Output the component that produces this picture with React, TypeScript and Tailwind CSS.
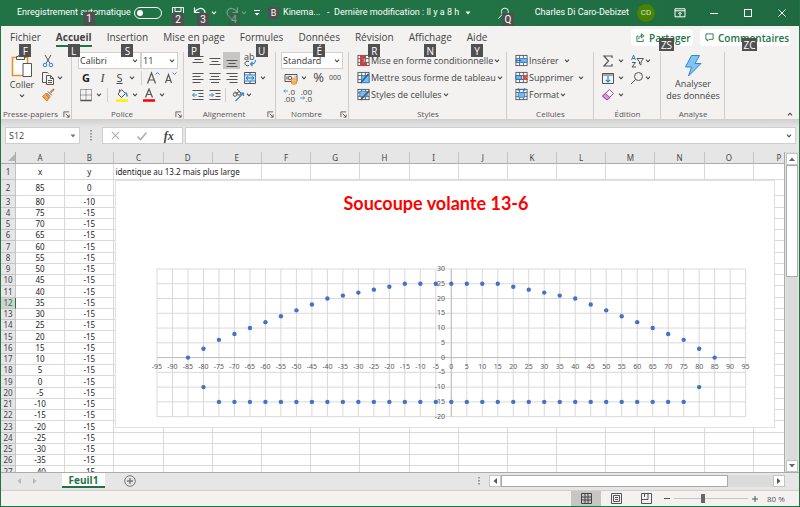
import { useState } from "react";
import type { ReactNode } from "react";

const columns = ["A", "B", "C", "D", "E", "F", "G", "H", "I", "J", "K", "L", "M", "N", "O"];

const tabs = [
  { name: "Fichier", hint: "F" },
  { name: "Accueil", hint: "L" },
  { name: "Insertion", hint: "S" },
  { name: "Mise en page", hint: "P" },
  { name: "Formules", hint: "U" },
  { name: "Données", hint: "É" },
  { name: "Révision", hint: "R" },
  { name: "Affichage", hint: "N" },
  { name: "Aide", hint: "Y" },
];

// rows 2 to 27 of the sheet
const data = Array.from({ length: 26 }, (_, i) => ({
  row: i + 2,
  x: 85 - i * 5,
  y: i === 0 ? 0 : i === 1 ? -10 : -15,
}));

// height of the dome for |x| = 0, 5, 10 ... 85
const dome = [25, 25, 25, 25, 24, 23, 22, 21, 20, 18, 16, 14, 12, 10, 8, 6, 3, 0];

const steps = Array.from({ length: 39 }, (_, i) => i * 5 - 95);
const levels = [30, 25, 20, 15, 10, 5, 0, -5, -10, -15, -20];

const points: number[][] = [];
for (const x of steps) {
  const a = Math.abs(x);
  if (a <= 85) points.push([x, dome[a / 5]]);
  if (a <= 75) points.push([x, -15]);
  if (a === 80) points.push([x, -10]);
}

const px = (x: number) => 42 + (x + 95) * 3.098;
const py = (y: number) => 89 + (30 - y) * 2.953;

function Hint({ children, className = "" }: { children: ReactNode; className?: string }) {
  return (
    <span
      className={`absolute z-10 flex h-[13px] min-w-[12px] items-center justify-center bg-[#505050] px-px text-[10px] leading-none text-white ${className}`}
    >
      {children}
    </span>
  );
}

function Caret({ className = "" }: { className?: string }) {
  return (
    <svg viewBox="0 0 6 4" className={`h-1 w-1.5 shrink-0 ${className}`} fill="none" stroke="currentColor" strokeWidth="1.1">
      <path d="M1 .7 3 2.8 5 .7" />
    </svg>
  );
}

function Icon({ children, label, className = "" }: { children: ReactNode; label: string; className?: string }) {
  return (
    <button type="button" aria-label={label} className={`flex h-[17px] w-[17px] shrink-0 items-center justify-center ${className}`}>
      <svg viewBox="0 0 14 14" className="h-[14px] w-[14px]" fill="none" stroke="#555" strokeWidth="1">
        {children}
      </svg>
    </button>
  );
}

function Launcher() {
  return (
    <svg viewBox="0 0 8 8" className="absolute right-[2px] bottom-px h-[7px] w-[7px]" fill="none" stroke="#555" strokeWidth="1">
      <path d="M1 7V1h6M3 3l4 4M7 4v3H4" />
    </svg>
  );
}

function Group({ title, className, launcher, children }: { title: string; className: string; launcher?: boolean; children: ReactNode }) {
  return (
    <section className={`relative flex shrink-0 flex-col ${className}`}>
      <div className="h-[51px]">{children}</div>
      <h2 className={`mt-auto text-center text-[8px] leading-[10px] whitespace-nowrap text-[#555] ${launcher ? "pr-[12px]" : ""}`}>{title}</h2>
      {launcher && <Launcher />}
      <span className="absolute top-0 right-0 h-full w-px bg-[#cfcdcb]" />
    </section>
  );
}

function Picker({ label, value, className }: { label: string; value: string; className: string }) {
  return (
    <div className={`relative h-[17px] ${className}`}>
      <select aria-label={label} className="block h-full w-full appearance-none border border-[#d2d0ce] bg-white px-px text-[9px] leading-none text-[#333]">
        <option>{value}</option>
      </select>
      <Caret className="pointer-events-none absolute top-[7px] right-[3px]" />
    </div>
  );
}

const Divider = () => <span className="block h-[14px] w-px shrink-0 bg-[#d2d0ce]" />;

function TableGlyph() {
  return (
    <>
      <rect x="1" y="1.5" width="12" height="11" fill="#fff" />
      <path d="M1 5h12M1 9h12M5 1.5v11M9 1.5v11" />
    </>
  );
}

function TitleBar() {
  return (
    <header className="flex h-[26px] shrink-0 items-center bg-linear-to-r from-[#217346] from-55% to-[#206a41] font-['Roboto',sans-serif] text-[9px] text-white">
      <label htmlFor="autosave" className="relative w-[117px] pl-4 whitespace-nowrap">
        Enregistrement automatique
        <Hint className="top-[6px] left-[82px]">1</Hint>
      </label>
      <span className="relative ml-4 flex h-3 w-7 items-center rounded-full border border-white">
        <input id="autosave" type="checkbox" role="switch" className="ml-0.5 h-1.5 w-1.5 appearance-none rounded-full bg-white" />
      </span>
      <button type="button" aria-label="Enregistrer" className="relative ml-[9px] h-full w-[14px]">
        <svg viewBox="0 0 14 14" className="h-[14px] w-[14px]" fill="none" stroke="#fff">
          <path d="M1.5 1.5h11v11h-9l-2-2zM4 1.5v4h6v-4M4 12.5v-4h6v4" />
        </svg>
        <Hint className="top-[13px] left-px">2</Hint>
      </button>
      <button type="button" aria-label="Annuler" className="relative ml-[8px] h-full w-[14px]">
        <svg viewBox="0 0 14 14" className="h-[14px] w-[14px]" fill="none" stroke="#fff" strokeWidth="1.2">
          <path d="M1.5 1.5v5h5M1.8 6.2C4 2.5 8 1.5 10.500 3.500 13 5.500 12 8.500 10 10.500L7 13.500" />
        </svg>
        <Hint className="top-[13px] left-[4px]">3</Hint>
      </button>
      <Caret className="ml-1" />
      <button type="button" aria-label="Rétablir" disabled className="relative ml-[8px] h-full w-[14px]">
        <svg viewBox="0 0 14 14" className="h-[14px] w-[14px] opacity-35" fill="none" stroke="#fff" strokeWidth="1.2">
          <path d="M12.500 1.500v5h-5M12.200 6.200C10 2.500 6 1.500 3.500 3.500 1 5.500 2 8.500 4 10.500L7 13.500" />
        </svg>
        <Hint className="top-[13px] left-[3px] opacity-40">4</Hint>
      </button>
      <Caret className="ml-0.5 opacity-35" />
      <svg viewBox="0 0 8 8" className="ml-[6px] h-2 w-2" fill="#fff">
        <path d="M1 1h6v1H1zM1.500 4h5L4 6.500z" />
      </svg>
      <span className="ml-[7px] flex h-[12px] w-[11px] items-center justify-center bg-[#505050] text-[9px] leading-none">B</span>
      <span className="ml-1 w-[44px]">Kinema...</span>
      <span className="w-[7px]">-</span>
      <button type="button" className="flex w-[150px] items-center gap-1.5 whitespace-nowrap">
        Dernière modification : Il y a 8 h
        <svg viewBox="0 0 6 4" className="h-1 w-1.5" fill="#fff">
          <path d="M.5.5h5L3 3.500z" />
        </svg>
      </button>
      <button type="button" aria-label="Rechercher" className="relative ml-[13px] h-full w-[16px]">
        <svg viewBox="0 0 14 14" className="h-[13px] w-[13px]" fill="none" stroke="#fff">
          <circle cx="8.500" cy="5" r="3.800" />
          <path d="M5.800 7.800 1.500 12.500" />
        </svg>
        <Hint className="top-[13px] left-[5px]">Q</Hint>
      </button>
      <span className="ml-auto whitespace-nowrap">Charles Di Caro-Debizet</span>
      <span className="ml-2 flex h-[18px] w-[18px] items-center justify-center rounded-full bg-[#498205] text-[8px] text-[#d5e8bd]">CD</span>
      <div className="flex items-center">
        <button type="button" aria-label="Options du ruban" className="flex w-[34px] justify-center pl-[16px]">
          <svg viewBox="0 0 12 10" className="h-[10px] w-3 shrink-0" fill="none" stroke="#fff">
            <path d="M1 .8h10v8H1zM1 2.800h10M6 8V4.500M4.300 6 6 4.300 7.700 6" />
          </svg>
        </button>
        <button type="button" aria-label="Réduire" className="flex w-[34px] justify-center pl-[16px]">
          <span className="h-px w-2 bg-white" />
        </button>
        <button type="button" aria-label="Agrandir" className="flex w-[34px] justify-center pl-[16px]">
          <span className="h-2 w-2 shrink-0 border border-white" />
        </button>
        <button type="button" aria-label="Fermer" className="flex w-[42px] justify-center pl-[8px]">
          <svg viewBox="0 0 8 8" className="h-2 w-2" stroke="#fff">
            <path d="m.5.5 7 7m0-7-7 7" />
          </svg>
        </button>
      </div>
    </header>
  );
}

function TabBar({ active, onSelect }: { active: string; onSelect: (name: string) => void }) {
  return (
    <nav className="flex h-[25px] shrink-0 gap-[15px] pl-[9px] text-[10px] text-[#444]">
      {tabs.map((tab) => (
        <button
          key={tab.name}
          type="button"
          onClick={() => onSelect(tab.name)}
          className={`relative h-[21px] whitespace-nowrap border-b-2 pt-[3px] leading-none ${
            active === tab.name ? "border-[#217346] font-bold" : "border-transparent"
          }`}
        >
          {tab.name}
          <Hint className="top-[18px] left-1/2 -translate-x-1/2 font-normal">{tab.hint}</Hint>
        </button>
      ))}
      <div className="ml-auto flex gap-[7px] pt-[3px] pr-[9px] font-semibold text-[#217346]">
        <button type="button" className="relative flex h-[17px] w-[62px] items-center gap-1 rounded-sm bg-white pl-[5px] leading-none">
          <svg viewBox="0 0 10 10" className="h-[9px] w-[9px] shrink-0" fill="none" stroke="#217346">
            <path d="M3 3.500H1v6h7V7M3 7c0-3 2-4 4-4M6 .8 9 3.200 6 5.500z" />
          </svg>
          Partager
          <Hint className="top-[9px] left-[28px] w-[15px] font-normal">ZS</Hint>
        </button>
        <button type="button" className="relative flex h-[17px] w-[90px] items-center gap-1 rounded-sm bg-white pl-[5px] leading-none">
          <svg viewBox="0 0 10 10" className="h-[9px] w-[9px] shrink-0" fill="none" stroke="#217346">
            <path d="M1 1h8v6H4.500L2.500 9V7H1z" />
          </svg>
          Commentaires
          <Hint className="top-[9px] left-[42px] w-[15px] font-normal">ZC</Hint>
        </button>
      </div>
    </nav>
  );
}

function Ribbon() {
  return (
    <div className="flex h-[68px] shrink-0 pt-px text-[9px] leading-none text-[#444]">
      <Group title="Presse-papiers" className="w-[71px]" launcher>
        <div className="flex">
          <button type="button" className="flex w-[38px] flex-col items-center pt-0.5 pl-1">
            <svg viewBox="0 0 22 24" className="h-[24px] w-[22px] shrink-0" fill="none">
              <path d="M1.500 3.500h15v18h-15z" fill="#fff" stroke="#e8912d" strokeWidth="1.600" />
              <path d="M5.500 5.500v-3h2a2 2 0 0 1 4 0h2v3z" fill="#f3f2f1" stroke="#555" />
              <path d="M12 9.500h8.500v13H12z" fill="#fff" stroke="#555" />
            </svg>
            <span className="mt-[2px]">Coller</span>
            <Caret className="mt-[5px]" />
          </button>
          <div className="flex flex-col">
            <Icon label="Couper">
              <path d="m4 1 5 8.500M10 1 5 9.500" />
              <circle cx="4" cy="11" r="1.800" stroke="#2b88d8" />
              <circle cx="10" cy="11" r="1.800" stroke="#2b88d8" />
            </Icon>
            <div className="flex items-center">
              <Icon label="Copier">
                <path d="M5 11.500H1.500v-10h5l1 1M5.500 4.500h4l3 3v6h-7zM9.500 4.500v3h3M7 9.500h4M7 11.500h4" />
              </Icon>
              <Caret className="ml-px" />
            </div>
            <Icon label="Reproduire la mise en forme">
              <path d="M13 1 9.500 4.500" stroke="#dd7a1f" strokeWidth="1.800" />
              <path d="m7 3.500 3.800 3.800M5.500 5 9 8.500" />
              <path d="m5 5.500 3.800 3.800-3 3.700L1.500 8.500z" fill="#f7b26b" stroke="#dd7a1f" />
              <path d="m3 8.500 3 3M5 7l3 3" stroke="#dd7a1f" />
            </Icon>
          </div>
        </div>
      </Group>

      <Group title="Police" className="w-[112px]" launcher>
        <div className="flex pl-[6px]">
          <Picker label="Police" value="Calibri" className="w-[63px]" />
          <Picker label="Taille" value="11" className="w-[37px]" />
        </div>
        <div className="flex h-[17px] items-center pl-[6px]">
          <button type="button" className="w-[16px] text-[11px] font-bold text-[#222]">G</button>
          <button type="button" className="w-[17px] font-['Liberation_Serif',serif] text-[12px] italic">I</button>
          <button type="button" className="w-[17px] text-[11px] underline">S</button>
          <Caret className="ml-px" />
          <span className="ml-[6px]"><Divider /></span>
          <Icon label="Augmenter la taille" className="ml-0.5">
            <path d="m1.500 12.500 4-10.500 4 10.500M3 9h5" strokeWidth="1.200" />
            <path d="m9.500 3.500 2-2 2 2" stroke="#2b88d8" />
          </Icon>
          <Icon label="Diminuer la taille">
            <path d="m2.500 12 3-8.500 3 8.500M3.500 9.500h4" strokeWidth="1.200" />
            <path d="m9.500 1.500 2 2 2-2" stroke="#2b88d8" />
          </Icon>
        </div>
        <div className="flex h-[17px] items-center pl-[5px]">
          <Icon label="Bordures">
            <path d="M1.500 1.500h11v11h-11zM7 1.500v11M1.500 7h11" strokeDasharray="1 1" />
            <path d="M1.500 12.500h11" strokeWidth="1.500" />
          </Icon>
          <Caret className="ml-0.5" />
          <span className="mx-[5px]"><Divider /></span>
          <Icon label="Remplissage">
            <path d="m6.500 1.500 4 4-4 4-3.500-3.500zM4.500 4V1.500" />
            <path d="M10.500 4.500c2 1.500 1.500 3 1.500 4" stroke="#2b88d8" strokeWidth="1.500" />
            <path d="M1 12.500h12" stroke="#ffef00" strokeWidth="2.500" />
          </Icon>
          <Caret className="ml-0.5" />
          <Icon label="Couleur de police" className="ml-[2px]">
            <path d="M3.500 9.500 7 1l3.500 8.500M4.800 6.500h4.400" strokeWidth="1.200" />
            <path d="M1 12.500h12" stroke="#f00" strokeWidth="2.500" />
          </Icon>
          <Caret className="ml-0.5" />
        </div>
      </Group>

      <Group title="Alignement" className="w-[92px]" launcher>
        <div className="flex h-[17px] items-center pl-[5px]">
          <Icon label="Aligner en haut"><path d="M1.500 2.500h11M3.500 5.500h7M1.500 8.500h11" /></Icon>
          <Icon label="Aligner au centre"><path d="M1.500 4.500h11M3.500 7.500h7M1.500 10.500h11" /></Icon>
          <Icon label="Aligner en bas" className="bg-[#c8c6c4]"><path d="M1.500 6.500h11M3.500 9.500h7M1.500 12.500h11" /></Icon>
          <span className="ml-[4px] h-[15px] w-[14px] leading-[7px]">
            ab
            <svg viewBox="0 0 14 8" className="h-2 w-[14px]" fill="none" stroke="#444">
              <path d="M5 1.500C2 .5 1 2 1 3.500S2.500 6.500 5 5.500" />
              <path d="M11.500 0c0 3-1 4-5 4M8.500 2l-2 2 2 2" stroke="#2b88d8" strokeWidth="1.200" />
            </svg>
          </span>
        </div>
        <div className="flex h-[17px] items-center pl-[5px]">
          <Icon label="Aligner à gauche"><path d="M1.500 2.500h11M1.500 5.500h8M1.500 8.500h11M1.500 11.500h8" /></Icon>
          <Icon label="Centrer"><path d="M1.500 2.500h11M3 5.500h8M1.500 8.500h11M3 11.500h8" /></Icon>
          <Icon label="Aligner à droite"><path d="M1.500 2.500h11M4.500 5.500h8M1.500 8.500h11M4.500 11.500h8" /></Icon>
          <Icon label="Fusionner et centrer" className="ml-px">
            <path d="M1.500 1.500h11v11h-11zM7 1.500v2.500M7 10v2.500" />
            <path d="M1.500 4h11v6h-11z" fill="#cfe6fa" stroke="#2b88d8" />
            <path d="M3 7h8M5 5.200 3.200 7 5 8.800M9 5.200 10.800 7 9 8.800" stroke="#1b6fbf" />
          </Icon>
          <Caret className="ml-[2px]" />
        </div>
        <div className="flex h-[17px] items-center pl-[5px]">
          <Icon label="Diminuer le retrait">
            <path d="M1.500 2.500h11M7.500 5.500h5M7.500 8.500h5M1.500 11.500h11" />
            <path d="M6 7H1.500M3.500 5l-2 2 2 2" stroke="#2b88d8" />
          </Icon>
          <Icon label="Augmenter le retrait">
            <path d="M1.500 2.500h11M7.500 5.500h5M7.500 8.500h5M1.500 11.500h11" />
            <path d="M1 7h4.500M3.500 5l2 2-2 2" stroke="#2b88d8" />
          </Icon>
          <span className="ml-[2px]"><Divider /></span>
          <Icon label="Orientation" className="ml-[3px]">
            <circle cx="4" cy="6.500" r="1.800" />
            <path d="m4 3.500 3 3M6 1l4.500 4.500" />
            <circle cx="8" cy="5.500" r="1.700" />
            <path d="m4.500 13 8-8M9.500 5h3v3" stroke="#2b88d8" strokeWidth="1.200" />
          </Icon>
          <Caret />
        </div>
      </Group>

      <Group title="Nombre" className="w-[73px]" launcher>
        <Picker label="Format de nombre" value="Standard" className="ml-[5px] w-[62px]" />
        <div className="flex h-[17px] items-center pl-[6px]">
          <Icon label="Format comptable">
            <path d="M1 3.500h12v7H1zM3 5.500v3M11 5.500v1" />
            <circle cx="6" cy="7" r="1.800" />
            <path d="M7.500 8.500v4c1 1 4 1 5 0v-4c-1-1-4-1-5 0M7.500 10.500c1 1 4 1 5 0" fill="#f9c37c" stroke="#e8912d" />
          </Icon>
          <Caret className="ml-0.5" />
          <button type="button" className="ml-[4px] w-[15px] text-[13px]">%</button>
          <button type="button" className="ml-[3px] text-[7px]">000</button>
        </div>
        <div className="flex h-[17px] items-center pl-[6px]">
          {["Ajouter une décimale", "Réduire les décimales"].map((label, i) => (
            <button key={label} type="button" aria-label={label} className="flex h-[17px] w-[17px] flex-col justify-center text-[8px] leading-[7px]">
              <span className="flex w-full items-center justify-between pl-px">
                {i === 0 ? <svg viewBox="0 0 7 6" className="h-1.5 w-[7px]" fill="none" stroke="#2b88d8"><path d="M7 3H1M3 1 1 3l2 2" /></svg> : <span />}
                <span className="pr-1">{i === 0 ? ".0" : ".00"}</span>
              </span>
              <span className="flex w-full items-center justify-between pl-px">
                {i === 1 ? <svg viewBox="0 0 7 6" className="h-1.5 w-[7px]" fill="none" stroke="#2b88d8"><path d="M0 3h6M4 1l2 2-2 2" /></svg> : <span />}
                <span className="pr-1">{i === 0 ? ".00" : ".0"}</span>
              </span>
            </button>
          ))}
        </div>
      </Group>

      <Group title="Styles" className="w-[158px]">
        <button type="button" className="flex h-[17px] items-center gap-px pl-[8px] whitespace-nowrap">
          <svg viewBox="0 0 14 14" className="h-[13px] w-[13px] shrink-0" fill="none" stroke="#555">
            <TableGlyph />
            <path d="M4.500 1v12M5 3h4M5 7h3M5 11h6" stroke="#d83b3b" strokeWidth="2.500" />
          </svg>
          Mise en forme conditionnelle <Caret />
        </button>
        <button type="button" className="flex h-[17px] items-center gap-px pl-[8px] whitespace-nowrap">
          <svg viewBox="0 0 14 14" className="h-[13px] w-[13px] shrink-0" fill="none" stroke="#555">
            <TableGlyph />
            <path d="M5 5h8v7.500H5z" fill="#7db9ea" stroke="#2b88d8" />
            <path d="m12.500 3-7 8-1.500 2" stroke="#1b5fa0" strokeWidth="1.600" />
          </svg>
          Mettre sous forme de tableau <Caret />
        </button>
        <button type="button" className="flex h-[17px] items-center gap-px pl-[8px] whitespace-nowrap">
          <svg viewBox="0 0 14 14" className="h-[13px] w-[13px] shrink-0" fill="none" stroke="#555">
            <TableGlyph />
            <path d="M3 3.500h8v6H3z" fill="#7db9ea" stroke="#2b88d8" />
            <path d="m13 3-7.500 8-1.500 2" stroke="#555" strokeWidth="1.600" />
          </svg>
          Styles de cellules <Caret />
        </button>
      </Group>

      <Group title="Cellules" className="w-[87px]">
        <button type="button" className="flex h-[17px] items-center gap-px pl-[8px]">
          <svg viewBox="0 0 14 14" className="h-[13px] w-[13px] shrink-0" fill="none" stroke="#555">
            <TableGlyph />
            <path d="M5 5h8v4H5z" fill="#7db9ea" stroke="#2b88d8" />
            <path d="M7 7H1M3.500 4.500 1 7l2.500 2.500" stroke="#1b6fbf" />
          </svg>
          Insérer <Caret className="ml-1" />
        </button>
        <button type="button" className="flex h-[17px] items-center gap-px pl-[8px]">
          <svg viewBox="0 0 14 14" className="h-[13px] w-[13px] shrink-0" fill="none" stroke="#555">
            <TableGlyph />
            <path d="M1 5h6v4H1z" fill="#7db9ea" stroke="#1b6fbf" />
            <path d="m8.500 4.500 5 5m0-5-5 5" stroke="#e03c31" strokeWidth="1.400" />
          </svg>
          Supprimer <Caret className="ml-1" />
        </button>
        <button type="button" className="flex h-[17px] items-center gap-px pl-[8px]">
          <svg viewBox="0 0 14 14" className="h-[13px] w-[13px] shrink-0" fill="none" stroke="#555">
            <TableGlyph />
            <path d="M3.500 5h7v5h-7z" fill="#7db9ea" stroke="#2b88d8" />
            <path d="M3.500 0v3M10.500 0v3M3.500 1.500h7" stroke="#1b6fbf" />
          </svg>
          Format <Caret />
        </button>
      </Group>

      <Group title="Édition" className="w-[67px]">
        <div className="flex h-[17px] items-center pl-[5px]">
          <Icon label="Somme automatique"><path d="M11 4V2H3l4.500 5L3 12h8v-2" strokeWidth="1.200" /></Icon>
          <Caret className="ml-[2px]" />
          <Icon label="Trier et filtrer" className="ml-[4px]">
            <path d="m1.500 6 2-5 2 5M2.200 4.500h2.600" stroke="#2b88d8" />
            <path d="M2 8.500h3.500l-3.500 4.500H6M7 4.500h6.500l-2.500 3.500v3L9.500 10V8z" />
          </Icon>
          <Caret />
        </div>
        <div className="flex h-[17px] items-center pl-[5px]">
          <Icon label="Remplir">
            <path d="M1.500 2.500h11v10h-11zM1.500 4h11" />
            <path d="M7 5v6M4.800 8.800 7 11l2.200-2.200" stroke="#2b88d8" strokeWidth="1.200" />
          </Icon>
          <Caret className="ml-[2px]" />
          <Icon label="Rechercher et sélectionner" className="ml-[4px]">
            <circle cx="8.500" cy="5.500" r="4" />
            <path d="m5.500 8.500-4.500 4.500" />
          </Icon>
          <Caret />
        </div>
        <div className="flex h-[17px] items-center pl-[5px]">
          <Icon label="Effacer">
            <path d="m8.500 1.500 4 4L6 12 1.500 8z" fill="#fff" stroke="#a349a4" />
            <path d="M4.500 5.500 9 9.500 6 12 1.500 8z" fill="#d39ad6" stroke="#a349a4" />
          </Icon>
          <Caret className="ml-[2px]" />
        </div>
      </Group>

      <Group title="Analyse" className="w-[64px]">
        <button type="button" className="flex w-full flex-col items-center pt-0.5 leading-[12px] whitespace-nowrap">
          <svg viewBox="0 0 18 24" className="h-[24px] w-[18px]" fill="#83c3f1" stroke="#2b88d8">
            <path d="M7.500 1.500h8L11 9.500h6L4.500 22l3-9H1.500z" />
          </svg>
          <span>Analyser</span>
          <span>des données</span>
        </button>
      </Group>
      <button type="button" aria-label="Réduire le ruban" className="mt-auto mr-[6px] mb-[3px] ml-auto">
        <Caret className="rotate-180" />
      </button>
    </div>
  );
}

function FormulaBar() {
  return (
    <div className="flex h-[33px] shrink-0 items-start bg-linear-to-b from-[#cfcfcf] to-[#e6e6e6] to-25% pt-[8px] pr-[3px] pl-1 text-[#444]">
      <div className="relative h-[17px] w-[75px]">
        <input aria-label="Zone Nom" defaultValue="S12" className="block h-full w-full border border-[#cfcfcf] bg-white pl-[3px] text-[9px]" />
        <svg viewBox="0 0 6 4" className="absolute top-[7px] right-[4px] h-1 w-1.5" fill="#777">
          <path d="M.5.500h5L3 3.500z" />
        </svg>
      </div>
      <svg viewBox="0 0 2 11" className="mt-[3px] ml-[10px] h-[11px] w-0.5" fill="#999">
        <path d="M0 0h2v1.500H0zM0 3h2v1.500H0zM0 6h2v1.500H0zM0 9h2v1.500H0z" />
      </svg>
      <div className="ml-[10px] flex h-[17px] w-[81px] items-center justify-around border border-[#cfcfcf] bg-white">
        <svg viewBox="0 0 10 10" className="h-[9px] w-[9px]" fill="none" stroke="#b0b0b0" strokeWidth="1.300">
          <path d="m1 1 8 8m0-8L1 9" />
        </svg>
        <svg viewBox="0 0 10 10" className="h-[10px] w-[10px]" fill="none" stroke="#b0b0b0" strokeWidth="1.600">
          <path d="M.5 5.500 3.500 8.500 9.500 1.500" />
        </svg>
        <button type="button" aria-label="Insérer une fonction" className="font-['Liberation_Serif',serif] text-[12px] leading-none font-bold italic">fx</button>
      </div>
      <div className="relative ml-0.5 h-[17px] flex-1">
        <input aria-label="Barre de formule" className="block h-full w-full border border-[#cfcfcf] bg-white px-1 text-[9px]" />
        <Caret className="absolute top-[7px] right-[4px]" />
      </div>
    </div>
  );
}

function Chart() {
  return (
    <figure className="absolute top-[28px] left-[114px] h-[248px] w-[660px] border border-[#e1e1e1] bg-white">
      <figcaption className="absolute top-[10px] left-0 w-[640px] text-center font-['Lato',sans-serif] text-[18px] leading-[24px] font-bold text-[#f00]">
        Soucoupe volante 13-6
      </figcaption>
      <svg viewBox="1 1 658 246" className="h-full w-full" fontSize="7" fill="#595959">
        <g stroke="#d9d9d9">
          {steps.map((x) => (
            <path key={x} d={`M${px(x)} ${py(30)}V${py(-20)}`} />
          ))}
          {levels.map((y) => (
            <path key={y} d={`M${px(-95)} ${py(y)}H${px(95)}`} />
          ))}
          <path d={`M${px(0)} ${py(30)}V${py(-20)}M${px(-95)} ${py(0)}H${px(95)}`} stroke="#bfbfbf" />
        </g>
        <g textAnchor="middle">
          {steps.map((x) => (
            <text key={x} x={px(x)} y="189">{x}</text>
          ))}
        </g>
        <g textAnchor="end">
          {levels.map((y) => (
            <text key={y} x="330" y={py(y) + 2}>{y}</text>
          ))}
        </g>
        <g fill="#4472c4">
          {points.map(([x, y]) => (
            <circle key={`${x},${y}`} cx={px(x)} cy={py(y)} r="2.200" />
          ))}
        </g>
      </svg>
    </figure>
  );
}

const line = "border-r border-b border-[#d9d9d9] p-0";
const side = "border-r border-b border-[#c4c4c4] p-0 text-[8px] font-normal";

function Sheet() {
  return (
    <div className="flex min-h-0 flex-1 bg-[#e6e6e6] font-['Noto_Sans',sans-serif]">
      <div className="relative flex-1 overflow-hidden border-r border-[#ababab]">
        <table className="w-full table-fixed border-separate border-spacing-0 bg-white text-center text-[8px] leading-[10px] text-[#222]">
          <colgroup>
            <col className="w-[15px]" />
            {columns.map((c) => (
              <col key={c} />
            ))}
            <col className="w-[30px]" />
          </colgroup>
          <thead>
            <tr className="h-[12px] bg-[#e6e6e6] text-[#444]">
              <th className="border-r border-b border-[#ababab] p-0">
                <svg viewBox="0 0 8 8" className="ml-auto h-[7px] w-[7px]" fill="#b4b4b4">
                  <path d="M8 0v8H0z" />
                </svg>
              </th>
              {columns.map((c) => (
                <th key={c} scope="col" className="border-r border-b border-r-[#c4c4c4] border-b-[#ababab] p-0 font-normal">{c}</th>
              ))}
              <th scope="col" className="border-b border-[#ababab] p-0 pl-[20px] font-normal">P</th>
            </tr>
          </thead>
          <tbody>
            <tr className="h-[16px]">
              <th scope="row" className={`${side} bg-[#e6e6e6] text-[#444]`}>1</th>
              <td className={line}>x</td>
              <td className={line}>y</td>
              <td colSpan={3} className="border-r border-b border-[#d9d9d9] p-0 pl-px text-left whitespace-nowrap">identique au 13.2 mais plus large</td>
              {columns.slice(5).map((c) => (
                <td key={c} className={line} />
              ))}
              <td className="border-b border-[#d9d9d9]" />
            </tr>
            {data.map(({ row, x, y }) => (
              <tr key={row} className={row === 2 ? "h-[16px]" : row % 4 === 3 ? "h-[12px]" : "h-[11px]"}>
                <th
                  scope="row"
                  className={`${side} ${row === 12 ? "border-r-[#217346] bg-[#d2d2d2] text-[#217346]" : "bg-[#e6e6e6] text-[#444]"}`}
                >
                  {row}
                </th>
                <td className={line}>{x}</td>
                <td className={line}>{y}</td>
                {columns.slice(2).map((c) => (
                  <td key={c} className={line} />
                ))}
                <td className="border-b border-[#d9d9d9]" />
              </tr>
            ))}
          </tbody>
        </table>
        <Chart />
      </div>
      <div className="mr-px ml-px flex w-[12px] flex-col bg-[#dbdbdb] pt-px">
        <button type="button" aria-label="Défiler vers le haut" className="flex h-[12px] items-center justify-center border border-[#c4c4c4] bg-white">
          <svg viewBox="0 0 6 4" className="h-1 w-1.5" fill="#666"><path d="M0 4h6L3 .5z" /></svg>
        </button>
        <div className="h-[112px] border border-[#ababab] bg-white" />
        <button type="button" aria-label="Défiler vers le bas" className="mt-auto flex h-[12px] items-center justify-center border border-[#c4c4c4] bg-white">
          <svg viewBox="0 0 6 4" className="h-1 w-1.5" fill="#666"><path d="M0 0h6L3 3.500z" /></svg>
        </button>
      </div>
    </div>
  );
}

function SheetTabs() {
  return (
    <div className="flex h-[18px] shrink-0 items-start border-t border-[#ababab] bg-[#e6e6e6]">
      <div className="flex w-[61px] items-center gap-[12px] pt-[5px] pl-[16px]">
        <svg viewBox="0 0 4 6" className="h-1.5 w-1" fill="#b8b8b8"><path d="M4 0v6L.500 3z" /></svg>
        <svg viewBox="0 0 4 6" className="h-1.5 w-1" fill="#b8b8b8"><path d="M0 0v6L3.500 3z" /></svg>
      </div>
      <button type="button" className="h-[15px] w-[43px] border-b-2 border-[#217346] bg-white text-[10px] leading-[12px] font-bold text-[#217346]">Feuil1</button>
      <button type="button" aria-label="Nouvelle feuille" className="mt-[2px] ml-[19px]">
        <svg viewBox="0 0 12 12" className="h-3 w-3" fill="none" stroke="#777">
          <circle cx="6" cy="6" r="5.300" />
          <path d="M6 3v6M3 6h6" strokeWidth="1.400" />
        </svg>
      </button>
      <svg viewBox="0 0 2 8" className="mt-[4px] ml-auto h-2 w-0.5" fill="#999">
        <path d="M0 0h2v1.500H0zM0 3h2v1.500H0zM0 6h2v1.500H0z" />
      </svg>
      <div className="mt-[2px] mr-[14px] ml-[9px] flex h-[12px] w-[296px] bg-[#dbdbdb]">
        <button type="button" aria-label="Défiler vers la gauche" className="flex w-[12px] items-center justify-center border border-[#c4c4c4] bg-white">
          <svg viewBox="0 0 4 6" className="h-1.5 w-1" fill="#555"><path d="M4 0v6L.500 3z" /></svg>
        </button>
        <div className="w-[227px] border border-[#ababab] bg-white" />
        <button type="button" aria-label="Défiler vers la droite" className="ml-auto flex w-[12px] items-center justify-center border border-[#c4c4c4] bg-white">
          <svg viewBox="0 0 4 6" className="h-1.5 w-1" fill="#555"><path d="M0 0v6L3.500 3z" /></svg>
        </button>
      </div>
    </div>
  );
}

function StatusBar() {
  const [zoom, setZoom] = useState(80);

  return (
    <footer className="flex h-[16px] shrink-0 items-center justify-end border-t border-[#d2d0ce] text-[8px] text-[#555]">
      <button type="button" aria-label="Normal" className="flex h-full w-[30px] items-center justify-center bg-[#c8c6c4]">
        <svg viewBox="0 0 11 11" className="h-[11px] w-[11px]" fill="none" stroke="#444">
          <path d="M.5.500h10v10H.500zM.500 4h10M.500 7h10M4 .500v10M7 .500v10" />
        </svg>
      </button>
      <button type="button" aria-label="Mise en page" className="flex h-full w-[30px] items-center justify-center">
        <svg viewBox="0 0 11 11" className="h-[11px] w-[11px]" fill="none" stroke="#555">
          <path d="M.5.500h10v10H.500zM2.500 2.500h6v6h-6zM4 4.500h3M4 6.500h3" />
        </svg>
      </button>
      <button type="button" aria-label="Aperçu des sauts de page" className="flex h-full w-[30px] items-center justify-center">
        <svg viewBox="0 0 11 11" className="h-[11px] w-[11px]" fill="none" stroke="#555">
          <path d="M.5.500h10v10H.500zM.500 6.500h6.500v-6M3.500.500v3.500" />
        </svg>
      </button>
      <button type="button" aria-label="Zoom arrière" className="ml-[3px] h-px w-[6px] bg-[#555]" onClick={() => setZoom(zoom - 10)} />
      <input
        type="range"
        aria-label="Zoom"
        min="10"
        max="190"
        value={zoom}
        onChange={(e) => setZoom(Number(e.target.value))}
        className="mx-1 h-[9px] w-[74px] appearance-none bg-[linear-gradient(#c8c6c4,#c8c6c4)] bg-[length:100%_1px] bg-center bg-no-repeat [&::-webkit-slider-thumb]:h-[9px] [&::-webkit-slider-thumb]:w-[4px] [&::-webkit-slider-thumb]:appearance-none [&::-webkit-slider-thumb]:bg-[#666]"
      />
      <button type="button" aria-label="Zoom avant" onClick={() => setZoom(zoom + 10)}>
        <svg viewBox="0 0 6 6" className="h-1.5 w-1.5" stroke="#555"><path d="M3 0v6M0 3h6" /></svg>
      </button>
      <span className="w-[41px] pl-[9px]">{zoom} %</span>
    </footer>
  );
}

export default function App() {
  const [active, setActive] = useState("Accueil");

  return (
    <main className="flex h-screen flex-col overflow-hidden border-r border-b border-l border-[#217346] bg-[#f3f2f1] font-['Open_Sans',sans-serif]">
      <TitleBar />
      <TabBar active={active} onSelect={setActive} />
      <Ribbon />
      <FormulaBar />
      <Sheet />
      <SheetTabs />
      <StatusBar />
    </main>
  );
}
